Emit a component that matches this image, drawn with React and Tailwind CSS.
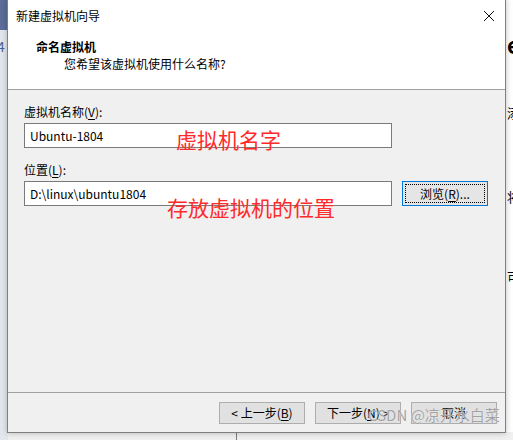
import React from 'react';

const font = { fontFamily: '"Noto Sans CJK SC", "Noto Sans", sans-serif' };

// Plain Win10-style push button
const WinButton = ({ children, focused = false, className = '' }) => (
    <div
        className={`flex items-center justify-center h-[22px] w-[86px] text-[12px] text-black ${focused ? 'border border-[#0078d7] bg-[#e5e5e5] p-[2px]' : 'border border-[#adadad] bg-[#e1e1e1]'} ${className}`}
    >
        {focused ? (
            <div className="flex h-full w-full items-center justify-center border border-dotted border-black">{children}</div>
        ) : (
            children
        )}
    </div>
);

const Underline = ({ children }) => <span className="underline underline-offset-2">{children}</span>;

const App = () => {
    return (
        <div className="relative h-[440px] w-[513px] overflow-hidden bg-white" style={font}>
            {/* Desktop behind the dialog */}
            <div className="absolute left-0 top-0 h-[30px] w-[8px] bg-[#5b6d98]"></div>
            <div className="absolute left-0 top-[30px] h-[410px] w-[8px] bg-[#e2e7ee]"></div>
            <div className="absolute left-[-3px] top-[39px] text-[14px] leading-none text-[#4a5f8c]">4</div>
            <div className="absolute left-[507px] top-[33px] text-[22px] font-bold leading-none text-black">e</div>
            <div className="absolute left-[507px] top-[106px] text-[13px] leading-none text-black">添</div>
            <div className="absolute left-[507px] top-[190px] text-[13px] leading-none text-black">将</div>
            <div className="absolute left-[507px] top-[270px] text-[13px] leading-none text-black">可</div>
            <div className="absolute left-0 top-[432px] h-[8px] w-[513px] bg-[#f0f0f0]"></div>
            <div className="absolute left-0 top-[432px] h-[8px] w-[8px] bg-[#e2e7ee]"></div>
            <div className="absolute left-[236px] top-[432px] h-[8px] w-px bg-[#7a7a7a]"></div>

            {/* Wizard window */}
            <div className="absolute left-[7px] top-[-1px] flex h-[434px] w-[499px] flex-col border border-[#7f7f7f] bg-[#f0f0f0] shadow-[0_0_6px_rgba(0,0,0,0.25)]">
                {/* Header */}
                <div className="flex h-[89px] flex-col bg-white">
                    <div className="flex h-[31px] items-center justify-between pl-[8px] pr-[8px] pt-[1px]">
                        <span className="text-[12px] text-black">新建虚拟机向导</span>
                        <svg width="12" height="12" viewBox="0 0 12 12" className="mr-[2px]">
                            <path d="M1 1 L11 11 M11 1 L1 11" stroke="#111" strokeWidth="1" />
                        </svg>
                    </div>
                    <div className="pl-[28px] pt-[8px] text-[12px] font-bold leading-[16px] text-black">命名虚拟机</div>
                    <div className="pl-[56px] pt-[1px] text-[12px] leading-[16px] text-black">您希望该虚拟机使用什么名称?</div>
                </div>
                <div className="h-px bg-[#a0a0a0]"></div>

                {/* Body */}
                <div className="flex flex-1 flex-col px-[16px] pt-[14px]">
                    <div className="text-[12px] leading-[16px] text-black">
                        虚拟机名称(<Underline>V</Underline>):
                    </div>
                    <div className="mt-[3px] flex h-[25px] w-[368px] items-center border border-[#7a7a7a] bg-white pl-[5px] text-[12px] text-black">
                        Ubuntu-1804
                    </div>
                    <div className="mt-[14px] text-[12px] leading-[16px] text-black">
                        位置(<Underline>L</Underline>):
                    </div>
                    <div className="mt-[3px] flex items-center gap-[10px]">
                        <div className="flex h-[25px] w-[368px] items-center border border-[#7a7a7a] bg-white pl-[5px] text-[12px] text-black">
                            D:\linux\ubuntu1804
                        </div>
                        <WinButton focused className="h-[25px]">
                            浏览(<Underline>R</Underline>)...
                        </WinButton>
                    </div>
                </div>

                {/* Footer */}
                <div className="h-px bg-[#a0a0a0]"></div>
                <div className="flex h-[39px] items-start justify-end gap-[10px] pr-[8px] pt-[9px]">
                    <WinButton>&lt; 上一步(<Underline>B</Underline>)</WinButton>
                    <WinButton>下一步(<Underline>N</Underline>) &gt;</WinButton>
                    <WinButton>取消</WinButton>
                </div>
            </div>

            {/* Red annotations */}
            <div className="absolute left-[176px] top-[129px] text-[21px] leading-none text-[#ff2a2a]">虚拟机名字</div>
            <div className="absolute left-[167px] top-[197px] text-[21px] leading-none text-[#ff2a2a]">存放虚拟机的位置</div>

            {/* Watermark */}
            <div className="absolute left-[368px] top-[407px] text-[15px] leading-none text-[#a3a3a3] [text-shadow:0_0_1px_#ffffff]">CSDN @凉开水白菜</div>
        </div>
    );
};

export default App;
